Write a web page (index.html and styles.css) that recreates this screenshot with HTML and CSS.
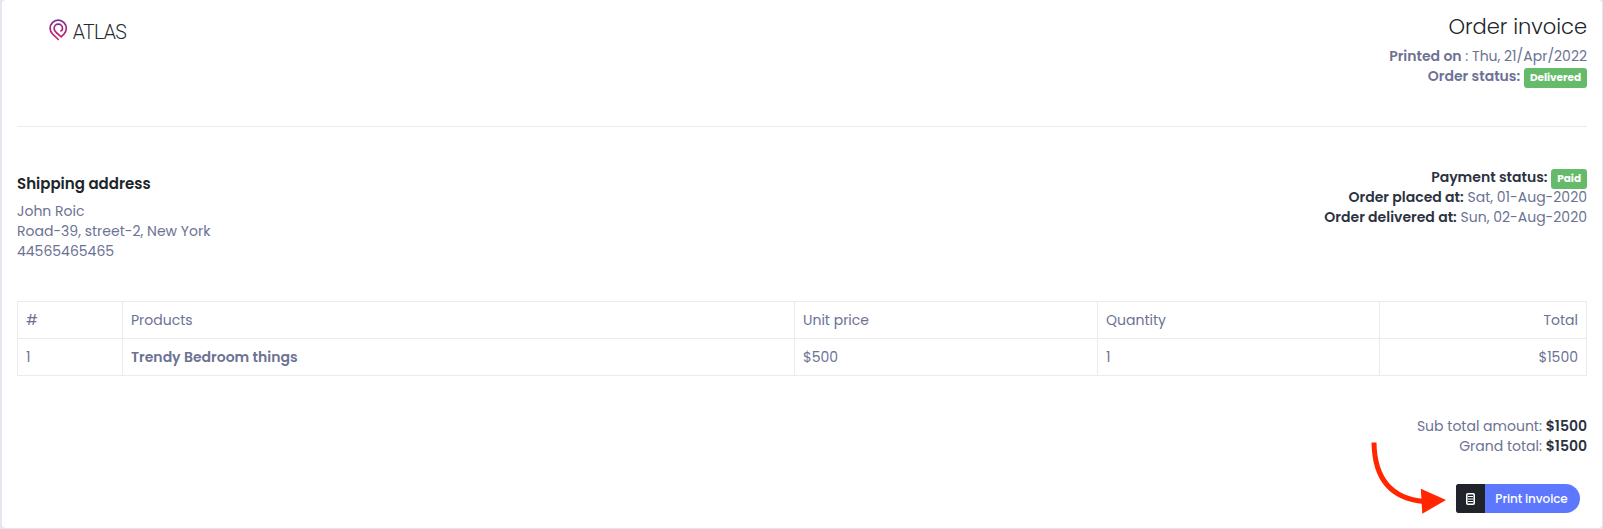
FILE: index.html
```html
<!DOCTYPE html>
<html lang="en">
<head>
<meta charset="utf-8">
<title>Order invoice</title>
<link rel="stylesheet" href="styles.css">
</head>
<body>
<main class="card">
  <header class="top">
    <div class="brand">
      <svg class="brand-mark" width="19" height="23" viewBox="0 0 19 23" fill="none" aria-hidden="true">
        <defs><linearGradient id="pin" x1="0" y1="0" x2="0" y2="1"><stop offset="0" stop-color="#7a2a90"/><stop offset="1" stop-color="#d6246e"/></linearGradient></defs>
        <path stroke="url(#pin)" stroke-width="1.7" d="M9.800 21 3.700 15.200C1.900 13.500 1.100 11.400 1.100 9.300a8.100 8.100 0 0 1 16.200 0c0 2.100-.8 4.200-2.400 5.900l-2.700 2.600-5-4.300C5.900 12.300 5.100 11 5.100 9.300a4.200 4.200 0 0 1 8.400 0c0 1.600-.9 2.700-2.300 2.700"/>
      </svg>
      <span class="brand-name">ATLAS</span>
    </div>
    <div class="summary">
      <h1 class="title">Order invoice</h1>
      <div class="line"><b>Printed on</b> : Thu, 21/Apr/2022</div>
      <div class="line"><b>Order status:</b> <span class="badge">Delivered</span></div>
    </div>
  </header>
  <section class="details">
    <address class="address">
      <h2 class="subtitle">Shipping address</h2>
      <div class="line">John Roic</div>
      <div class="line">Road-39, street-2, New York</div>
      <div class="line">44565465465</div>
    </address>
    <div class="facts">
      <div class="line"><b>Payment status:</b> <span class="badge">Paid</span></div>
      <div class="line"><b>Order placed at:</b> Sat, 01-Aug-2020</div>
      <div class="line"><b>Order delivered at:</b> Sun, 02-Aug-2020</div>
    </div>
  </section>
  <table class="items">
    <colgroup><col class="c-num"><col class="c-product"><col class="c-price"><col class="c-qty"><col class="c-total"></colgroup>
    <tr><td>#</td><td>Products</td><td>Unit price</td><td>Quantity</td><td class="right">Total</td></tr>
    <tr><td>1</td><td><b>Trendy Bedroom things</b></td><td>$500</td><td>1</td><td class="right">$1500</td></tr>
  </table>
  <div class="totals">
    <div class="line">Sub total amount: <b>$1500</b></div>
    <div class="line">Grand total: <b>$1500</b></div>
  </div>
  <div class="actions">
    <button class="print" type="button">
      <span class="print-icon">
        <svg width="9" height="12" viewBox="0 0 9 12" aria-hidden="true"><rect x=".8" y=".8" width="7.400" height="10.400" rx="1" fill="none" stroke="#fff" stroke-width="1.600"/><path d="M2 3.500h5M2 6h5M2 8.500h5" stroke="#fff" stroke-width="1.100"/></svg>
      </span>
      <span class="print-label">Print invoice</span>
    </button>
  </div>
  <svg class="arrow" width="76" height="76" viewBox="0 0 76 76" aria-hidden="true">
    <path d="M4 2.500C4.500 38 20 58.500 54 61.500" fill="none" stroke="#ff2600" stroke-width="5"/>
    <path d="M50.800 48.800 76 60 52.300 73.700z" fill="#ff2600"/>
  </svg>
</main>
</body>
</html>
```
FILE: styles.css
```css
* { box-sizing: border-box; }
body {
  margin: 0;
  background: #e6e6ef;
  color: #6c7293;
  font: 14px/20px Poppins, Inter, sans-serif;
}
b { font-weight: 600; }
.card {
  position: relative;
  height: 528px;
  margin: 0 1px 0 2px;
  padding: 0 15px;
  background: #fff;
  border-radius: 4px;
}
.top {
  display: flex;
  justify-content: space-between;
  height: 127px;
  border-bottom: 1px solid #ebebeb;
}
.brand {
  display: flex;
  gap: 5px;
  padding: 19px 0 0 31.700px;
}
.brand-name {
  color: #25282c;
  font: 300 19.5px/27px Roboto, sans-serif;
  letter-spacing: -.65px;
}
.summary, .facts, .totals { text-align: right; }
.summary { padding-top: 14px; }
.title {
  margin: 0 0 7px;
  color: #212529;
  font-size: 21px;
  font-weight: 300;
  line-height: 25px;
}
.line { height: 20px; white-space: nowrap; }
.badge {
  display: inline-block;
  height: 20px;
  margin-top: 2px;
  padding: 0 6px;
  background: #66bb6a;
  border-radius: 3px;
  color: #fff;
  font-size: 10.5px;
  font-weight: 700;
  line-height: 19px;
  letter-spacing: -.04px;
  vertical-align: top;
}
.details {
  display: flex;
  justify-content: space-between;
  height: 174px;
  padding-top: 40px;
}
.address { padding-top: 7px; font-style: normal; }
.subtitle {
  margin: 0 0 7px;
  color: #212529;
  font-size: 15px;
  font-weight: 600;
  line-height: 20px;
}
.facts b, .totals b { color: #2c323f; }
.items {
  width: 1570px;
  table-layout: fixed;
  border-collapse: collapse;
}
.items td {
  height: 37px;
  padding: 0 8px;
  border: 1px solid #ebebeb;
}
.c-num { width: 105px; }
.c-product { width: 672px; }
.c-price { width: 303px; }
.c-qty { width: 282px; }
.items .right { text-align: right; }
.totals { padding-top: 40px; }
.actions {
  display: flex;
  justify-content: flex-end;
  padding: 28px 7px 0 0;
}
.print {
  display: flex;
  height: 29px;
  padding: 0;
  overflow: hidden;
  border: 0;
  border-radius: 3px 15px 15px 3px;
  background: #5e77ff;
  color: #fff;
  font: 500 12px/29px Poppins, Inter, sans-serif;
  letter-spacing: -.1px;
}
.print-icon {
  display: grid;
  place-items: center;
  width: 29px;
  height: 29px;
  background: #20232a;
}
.print-label { width: 95px; padding-right: 2px; white-space: nowrap; }
.arrow { position: absolute; left: 1368px; top: 440px; }
```
